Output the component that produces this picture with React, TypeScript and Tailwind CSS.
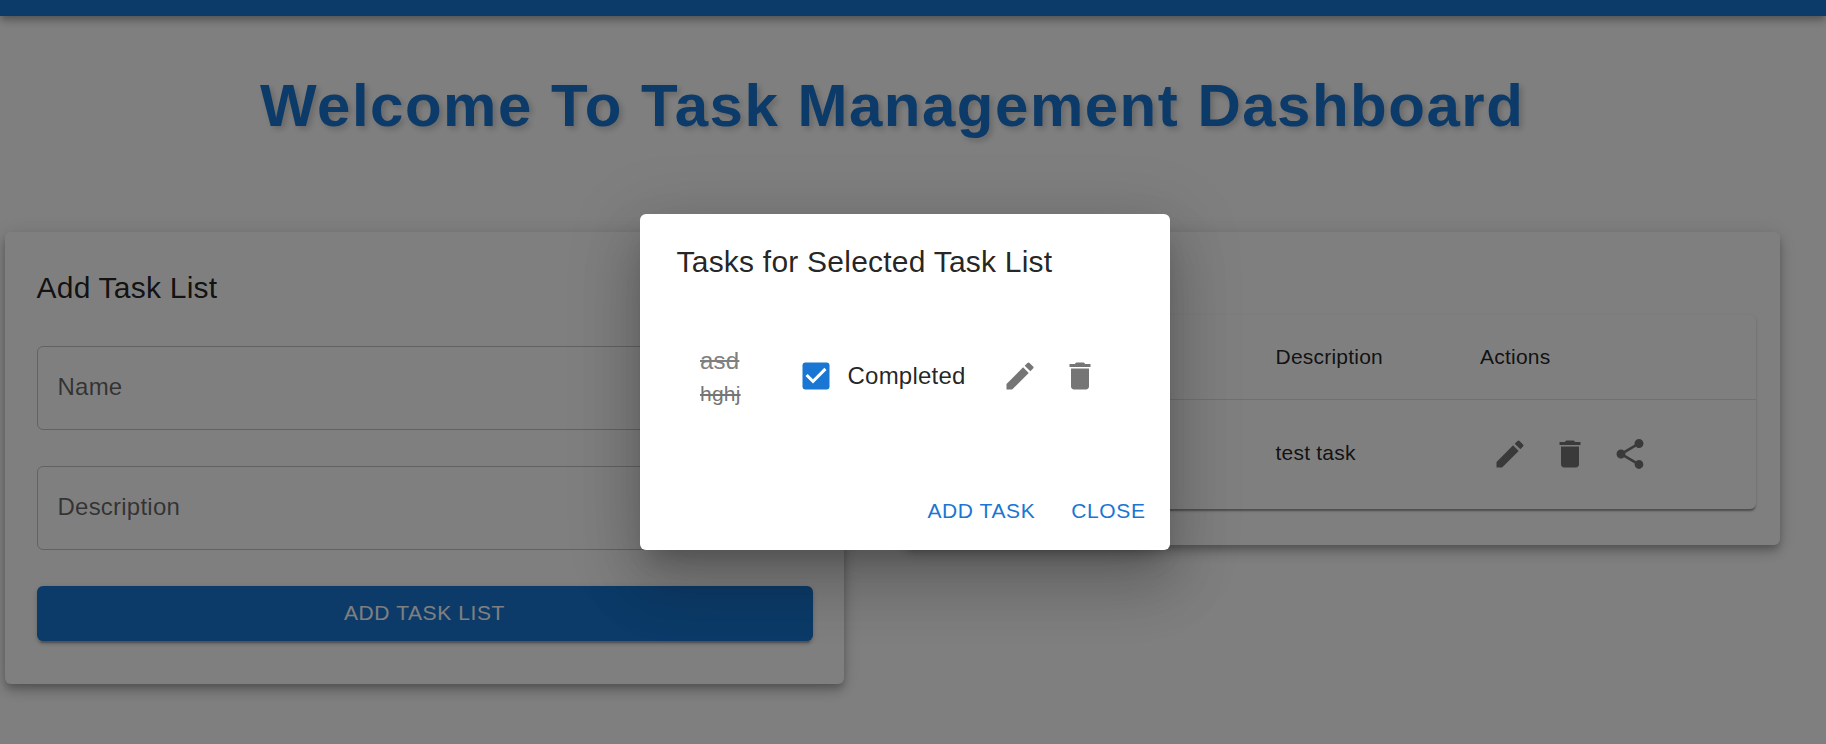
import React from "react";
import { MdEdit, MdDelete, MdShare, MdCheckBox } from "react-icons/md";

const cardShadow =
  "shadow-[0_4.5px_7.5px_-1.5px_rgba(0,0,0,0.2),0_7.5px_12px_0_rgba(0,0,0,0.14),0_1.5px_21px_0_rgba(0,0,0,0.12)]";

function Field({ label }: { label: string }) {
  return (
    <div className="flex h-[84px] items-center rounded-[6px] border border-black/23 pb-0.5 pl-[19.5px] text-[24px] tracking-[0.225px] text-black/60">
      {label}
    </div>
  );
}

function AddTaskListCard() {
  return (
    <section className={`flex h-[452px] w-[839px] shrink-0 flex-col rounded-[6px] bg-white pl-8 pr-[31px] pt-8 ${cardShadow}`}>
      <h2 className="-ml-[0.5px] mb-[34px] h-12 text-[30px] leading-[48px] tracking-[0.225px] text-black/87">Add Task List</h2>
      <div className="flex flex-col gap-9">
        <Field label="Name" />
        <Field label="Description" />
        <button className="h-[55px] rounded-[6px] bg-[#1976d2] pb-0.5 pr-px text-[21px] tracking-[0.6px] text-white shadow-[0_4.5px_1.5px_-3px_rgba(0,0,0,0.2),0_3px_3px_0_rgba(0,0,0,0.14),0_1.5px_7.5px_0_rgba(0,0,0,0.12)]">
          ADD TASK LIST
        </button>
      </div>
    </section>
  );
}

function TaskListsCard() {
  return (
    <section className={`h-[313px] w-[875px] shrink-0 rounded-[6px] bg-white px-6 pt-[83px] ${cardShadow}`}>
      <div className="rounded-[6px] bg-white shadow-[0_3px_1.5px_-1.5px_rgba(0,0,0,0.2),0_1.5px_1.5px_0_rgba(0,0,0,0.14),0_1.5px_4.5px_0_rgba(0,0,0,0.12)]">
        <div className="grid h-[85px] grid-cols-[204.5px_1fr] items-center border-b border-[#e0e0e0] pl-[346.5px] text-[21px] tracking-[0.22px] text-black/87">
          <span>Description</span>
          <span>Actions</span>
        </div>
        <div className="grid h-[109px] grid-cols-[204.5px_1fr] items-center pb-0.5 pl-[346.5px] text-[21px] tracking-[0.22px] text-black/87">
          <span className="pb-0.5">test task</span>
          <div className="flex gap-6 pl-3 text-[36px] text-black/54">
            <MdEdit />
            <MdDelete />
            <MdShare />
          </div>
        </div>
      </div>
    </section>
  );
}

function TasksDialog() {
  return (
    <div
      role="dialog"
      className="flex h-[336px] w-[530px] flex-col rounded-[6px] bg-white shadow-[0_16.5px_22.5px_-10.5px_rgba(0,0,0,0.2),0_36px_57px_4.5px_rgba(0,0,0,0.14),0_13.5px_69px_12px_rgba(0,0,0,0.12)]"
    >
      <h2 className="pl-[36.5px] pt-6 text-[30px] leading-[48px] tracking-[0.225px] text-black/87">
        Tasks for Selected Task List
      </h2>
      <div className="flex h-[184px] items-center pb-[5px] pl-[60px]">
        <div className="w-[98px]">
          <p className="text-[24px] leading-[36px] tracking-[0.225px] text-[#808080] line-through">asd</p>
          <p className="text-[21px] leading-[30px] tracking-[0.22px] text-[#757575] line-through">hghj</p>
        </div>
        <MdCheckBox className="size-9 text-[#1976d2]" />
        <span className="ml-[13.5px] w-[154.5px] text-[24px] tracking-[0.225px] text-black/87">Completed</span>
        <div className="flex gap-6 text-[36px] text-black/54">
          <MdEdit />
          <MdDelete />
        </div>
      </div>
      <div className="flex justify-end gap-9 pr-[24.5px] pt-[13px] text-[21px] leading-[55px] tracking-[0.6px] text-[#1976d2]">
        <button>ADD TASK</button>
        <button>CLOSE</button>
      </div>
    </div>
  );
}

export default function App() {
  return (
    <div className="relative h-[744px] w-full overflow-hidden bg-white font-['Liberation_Sans',Arial,sans-serif]">
      <header className="h-4 bg-[#1976d2] shadow-[0_3px_6px_-1.5px_rgba(0,0,0,0.2),0_6px_7.5px_0_rgba(0,0,0,0.14),0_1.5px_15px_0_rgba(0,0,0,0.12)]" />
      <h1 className="h-[216px] pl-[260px] pt-[54px] text-[60px] font-bold leading-[72px] tracking-[1.5px] whitespace-nowrap text-[#1976d2] [text-shadow:3px_3px_6px_rgba(0,0,0,0.2)]">
        Welcome To Task Management Dashboard
      </h1>
      <main className="flex items-start gap-[61px] pl-[5px]">
        <AddTaskListCard />
        <TaskListsCard />
      </main>
      <div className="absolute inset-0 flex items-start bg-black/50 pl-[640px] pt-[214px]">
        <TasksDialog />
      </div>
    </div>
  );
}
